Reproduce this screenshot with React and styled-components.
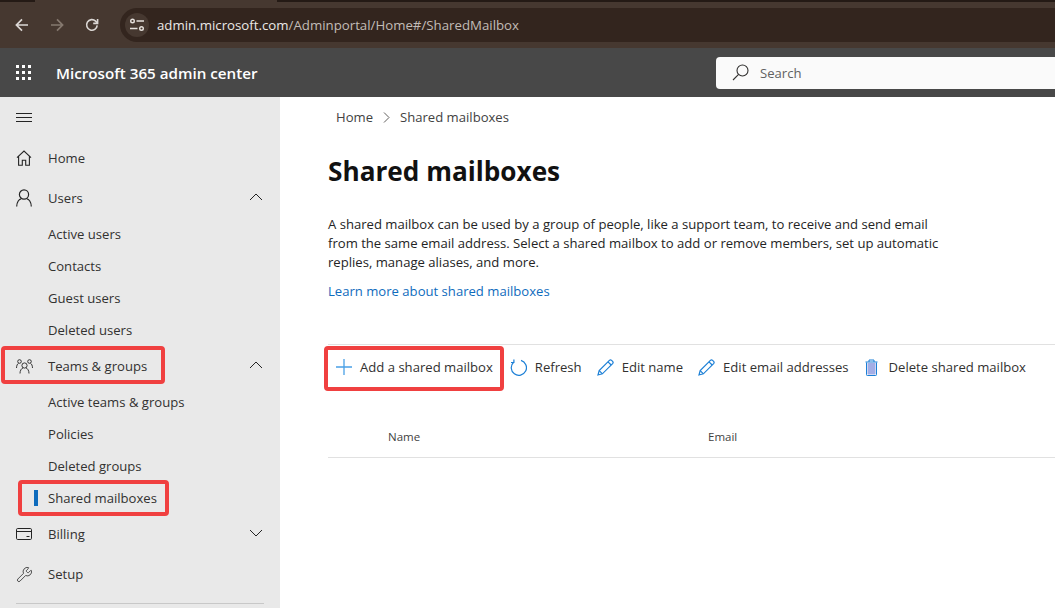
import React from 'react';
import styled, { createGlobalStyle } from 'styled-components';
import { Wrench } from 'lucide-react';

const GlobalStyle = createGlobalStyle`
    html, body{
        margin: 0;
        padding: 0;
        height: 100%;
        overflow: hidden;
        background: white;
    }
    body{
        font-family: "Open Sans", "Noto Sans", sans-serif;
        font-size: 13.1px;
        color: #323130;
    }
`;

const subUsers = ['Active users', 'Contacts', 'Guest users', 'Deleted users'];

const Back = (props) => (
    <svg width="14" height="14" viewBox="0 0 14 14" fill="none" stroke="currentColor" strokeWidth="1.7" {...props}>
        <path d="M13 7H1.6M7 1.400 1.400 7 7 12.600" />
    </svg>
);

const Reload = () => (
    <svg width="14" height="14" viewBox="0 0 14 14" fill="none" stroke="currentColor" strokeWidth="1.6">
        <path d="M12.2 7.4A5.3 5.3 0 1 1 10.6 3.1L12.4 5" />
        <path d="M12.6 1v4.4H8.2" />
    </svg>
);

const Tune = () => (
    <svg width="16" height="14" viewBox="0 0 16 14" fill="none" stroke="#e6e1dd" strokeWidth="1.4">
        <circle cx="3.500" cy="3" r="1.8" />
        <path d="M7.500 3H15M1 10.500h7.500" />
        <circle cx="12.500" cy="10.500" r="1.8" />
    </svg>
);

const Waffle = () => (
    <svg width="16" height="16" viewBox="0 0 16 16" fill="white">
        {[0, 6, 12].map((y) =>
            [0, 6, 12].map((x) => <rect key={x + '-' + y} x={x} y={y} width="3" height="3" />)
        )}
    </svg>
);

const Magnifier = () => (
    <svg width="17" height="17" viewBox="0 0 17 17" fill="none" stroke="#323130" strokeWidth="1.1">
        <circle cx="10.500" cy="6.500" r="5.500" />
        <path d="M6.600 10.400 1 16" />
    </svg>
);

const Hamburger = () => (
    <svg width="16" height="9" viewBox="0 0 16 9" stroke="#242424" strokeWidth="1">
        <path d="M0 .5h16M0 4.500h16M0 8.500h16" />
    </svg>
);

const HomeIcon = () => (
    <svg width="16" height="16" viewBox="0 0 16 16" fill="none" stroke="#242424" strokeWidth="1.1">
        <path d="M1 7.600 8 1l7 6.600M2.600 6.400v8.800h3.700v-5h3.400v5h3.700V6.400" />
    </svg>
);

const UserIcon = () => (
    <svg width="16" height="18" viewBox="0 0 16 18" fill="none" stroke="#242424" strokeWidth="1.2">
        <circle cx="8" cy="5.500" r="4.600" />
        <path d="M.7 17.500c0-4.600 2.600-7.400 4.400-7.700M15.300 17.500c0-4.600-2.600-7.400-4.400-7.700" />
    </svg>
);

const TeamIcon = () => (
    <svg width="17" height="15" viewBox="0 0 17 15" fill="none" stroke="#242424" strokeWidth="0.9">
        <circle cx="3.500" cy="2.500" r="1.800" />
        <circle cx="13.500" cy="2.500" r="1.800" />
        <circle cx="8.500" cy="6.500" r="2.600" />
        <path d="M.5 9c0-2.500 1-4.200 2-4.700M16.500 9c0-2.500-1-4.200-2-4.700M4 14.500c0-3 1.400-5 3-5.600M13 14.500c0-3-1.400-5-3-5.600" />
    </svg>
);

const CardIcon = () => (
    <svg width="16" height="12" viewBox="0 0 16 12" fill="none" stroke="#242424" strokeWidth="1">
        <rect x=".5" y=".5" width="15" height="11" rx="1.200" />
        <path d="M.5 3.500h15M10.500 8.500h3" />
    </svg>
);

const Plus = () => (
    <svg width="16" height="16" viewBox="0 0 16 16" stroke="#4aa0e6" strokeWidth="1.3">
        <path d="M8 0v16M0 8h16" />
    </svg>
);

const RefreshIcon = () => (
    <svg width="17" height="17" viewBox="0 0 17 17" fill="none" stroke="#1b7fd6" strokeWidth="1.2">
        <path d="M3.600 3.200A7.600 7.600 0 1 0 11 1.400" />
        <path d="M3.900.6v2.900H1" />
    </svg>
);

const Pencil = () => (
    <svg width="17" height="17" viewBox="0 0 17 17" fill="none" stroke="#1b7fd6" strokeWidth="1.2">
        <path d="M1 16l1.200-4.400L12.400 1.400a1.600 1.600 0 0 1 2.200 0l1 1a1.600 1.600 0 0 1 0 2.200L5.400 14.800z" />
        <path d="M2.200 11.600l3.200 3.200M11 2.800l3.200 3.200" />
    </svg>
);

const TrashIcon = () => (
    <svg width="16" height="17" viewBox="0 0 16 17">
        <rect x="2.500" y="4" width="8" height="11.500" fill="#a4aee6" />
        <path d="M1.500 3.500v12.200a.8.8 0 0 0 .8.8h8.400a.8.8 0 0 0 .8-.8V3.500M.5 3h12M4 3V1h5v2" fill="none" stroke="#1b7fd6" strokeWidth="1" />
    </svg>
);

const Chevron = ({ up }) => (
    <ChevronBox width="14" height="8" viewBox="0 0 14 8" fill="none" stroke="#242424" strokeWidth="1">
        <path d={up ? 'M1 7 7 1l6 6' : 'M1 1l6 6 6-6'} />
    </ChevronBox>
);

const NavRow = ({ icon, label, chevron, mark }) => (
    <TopRow>
        {mark && <Mark $top={0} $left={1} $width={164} $height={38} />}
        <IconSlot>{icon}</IconSlot>
        {label}
        {chevron && <Chevron up={chevron === 'up'} />}
    </TopRow>
);

export default function App(){
    return (
        <Page>
            <GlobalStyle />
            <TopStrip>
                <TabShade $width={35} />
                <ActiveTab />
                <TabShade $grow />
            </TopStrip>
            <BrowserBar>
                <BarButton><Back /></BarButton>
                <BarButton $dim><Back transform="scale(-1 1)" /></BarButton>
                <BarButton><Reload /></BarButton>
                <UrlPill>
                    <SiteIcon><Tune /></SiteIcon>
                    <UrlHost>admin.microsoft.com</UrlHost>
                    <UrlPath>/Adminportal/Home#/SharedMailbox</UrlPath>
                </UrlPill>
            </BrowserBar>
            <AppHeader>
                <WaffleSlot><Waffle /></WaffleSlot>
                <AppTitle>Microsoft 365 admin center</AppTitle>
                <SearchBox>
                    <Magnifier />
                    <SearchText>Search</SearchText>
                </SearchBox>
            </AppHeader>
            <Body>
                <Sidebar>
                    <MenuRow><Hamburger /></MenuRow>
                    <NavRow icon={<HomeIcon />} label="Home" />
                    <NavRow icon={<UserIcon />} label="Users" chevron="up" />
                    {subUsers.map((item) => <SubRow key={item}>{item}</SubRow>)}
                    <NavRow icon={<TeamIcon />} label="Teams & groups" chevron="up" mark />
                    <SubRow>Active teams &amp; groups</SubRow>
                    <SubRow>Policies</SubRow>
                    <SubRow>Deleted groups</SubRow>
                    <SubRow>
                        <ActiveBar />
                        <Mark $top={-2} $left={18} $width={151} $height={36} />
                        Shared mailboxes
                    </SubRow>
                    <NavRow icon={<CardIcon />} label="Billing" chevron="down" />
                    <NavRow icon={<Wrench size={17} strokeWidth={1.1} color="#242424" />} label="Setup" />
                    <SideDivider />
                </Sidebar>
                <Main>
                    <Breadcrumb>
                        <span>Home</span>
                        <svg width="7" height="11" viewBox="0 0 7 11" fill="none" stroke="#605e5c" strokeWidth="1">
                            <path d="M1 .5l5 5-5 5" />
                        </svg>
                        <span>Shared mailboxes</span>
                    </Breadcrumb>
                    <Title>Shared mailboxes</Title>
                    <Description>
                        A shared mailbox can be used by a group of people, like a support team, to receive and send email
                        from the same email address. Select a shared mailbox to add or remove members, set up automatic
                        replies, manage aliases, and more.
                    </Description>
                    <LearnLink>Learn more about shared mailboxes</LearnLink>
                    <Toolbar>
                        <ToolButton $gap={17}>
                            <Mark $top={-12} $left={-12} $width={180} $height={45} />
                            <Plus />Add a shared mailbox
                        </ToolButton>
                        <ToolButton $gap={15}><RefreshIcon />Refresh</ToolButton>
                        <ToolButton $gap={15}><Pencil />Edit name</ToolButton>
                        <ToolButton><Pencil />Edit email addresses</ToolButton>
                        <ToolButton><TrashIcon />Delete shared mailbox</ToolButton>
                    </Toolbar>
                    <TableHead>
                        <NameCol>Name</NameCol>
                        <span>Email</span>
                    </TableHead>
                </Main>
            </Body>
        </Page>
    );
}

const Page = styled.div`
    width: 1055px;
    height: 608px;
    display: flex;
    flex-direction: column;
    overflow: hidden;
`;

const TopStrip = styled.div`
    height: 2px;
    display: flex;
`;

const TabShade = styled.div`
    background: #241a15;
    width: ${(p) => (p.$width ? p.$width + 'px' : 'auto')};
    flex: ${(p) => (p.$grow ? 1 : 'none')};
`;

const ActiveTab = styled.div`
    width: 242px;
    background: #463830;
`;

const BrowserBar = styled.div`
    height: 46px;
    background: #463830;
    display: flex;
    align-items: center;
    padding-left: 4px;
    box-sizing: border-box;
`;

const BarButton = styled.div`
    width: 35px;
    display: flex;
    justify-content: center;
    color: ${(p) => (p.$dim ? '#85796f' : '#dcd8d5')};
`;

const UrlPill = styled.div`
    flex: 1;
    height: 34px;
    margin-left: 11px;
    background: #33251e;
    border-radius: 17px 0 0 17px;
    display: flex;
    align-items: center;
    padding-left: 5px;
    font-size: 13.25px;
`;

const SiteIcon = styled.div`
    width: 24px;
    height: 24px;
    border-radius: 50%;
    background: #463830;
    display: flex;
    align-items: center;
    justify-content: center;
    margin-right: 8px;
`;

const UrlHost = styled.span`
    color: #ebe8e6;
`;

const UrlPath = styled.span`
    color: #c2bcb7;
`;

const AppHeader = styled.div`
    height: 49px;
    background: #484848;
    display: flex;
    align-items: center;
    flex: none;
`;

const WaffleSlot = styled.div`
    width: 56px;
    padding-left: 16px;
    box-sizing: border-box;
    display: flex;
`;

const AppTitle = styled.div`
    color: white;
    font-size: 15.2px;
    font-weight: 600;
    width: 660px;
`;

const SearchBox = styled.div`
    flex: 1;
    height: 32px;
    background: #fafafa;
    border-radius: 4px 0 0 4px;
    display: flex;
    align-items: center;
    gap: 11px;
    padding-left: 16px;
`;

const SearchText = styled.span`
    color: #616161;
    margin-top: 1px;
`;

const Body = styled.div`
    flex: 1;
    display: flex;
    min-height: 0;
`;

const Sidebar = styled.nav`
    width: 280px;
    flex: none;
    background: #e9e9e9;
`;

const MenuRow = styled.div`
    height: 41px;
    display: flex;
    align-items: center;
    padding-left: 16px;
`;

const TopRow = styled.div`
    position: relative;
    height: 40px;
    display: flex;
    align-items: center;
    padding-left: 16px;
`;

const IconSlot = styled.div`
    width: 32px;
    display: flex;
    align-items: center;
`;

const ChevronBox = styled.svg`
    position: absolute;
    left: 249px;
    top: 15px;
`;

const SubRow = styled.div`
    position: relative;
    height: 32px;
    display: flex;
    align-items: center;
    padding-left: 48px;
`;

const ActiveBar = styled.div`
    position: absolute;
    left: 34px;
    top: 8px;
    width: 4px;
    height: 16px;
    background: #0f6cbd;
`;

const Mark = styled.div`
    position: absolute;
    top: ${(p) => p.$top}px;
    left: ${(p) => p.$left}px;
    width: ${(p) => p.$width}px;
    height: ${(p) => p.$height}px;
    box-sizing: border-box;
    border: 4px solid #f04040;
    border-radius: 4px;
    pointer-events: none;
`;

const SideDivider = styled.div`
    height: 1px;
    margin: 9px 16px 0;
    background: #c8c8c8;
`;

const Main = styled.main`
    flex: 1;
    min-width: 0;
    padding-left: 48px;
    background: white;
`;

const Breadcrumb = styled.div`
    height: 40px;
    display: flex;
    align-items: center;
    gap: 10px;
    padding-left: 8px;
    color: #424242;
    white-space: nowrap;
`;

const Title = styled.h1`
    margin: 15px 0 0;
    font-size: 26.2px;
    font-weight: 700;
    line-height: 38px;
    color: #111;
    white-space: nowrap;
`;

const Description = styled.p`
    margin: 25px 0 0;
    width: 620px;
    line-height: 19px;
    color: #242424;
`;

const LearnLink = styled.div`
    margin-top: 10px;
    line-height: 19px;
    color: #0f6cbd;
`;

const Toolbar = styled.div`
    margin-top: 43px;
    height: 44px;
    border-top: 1px solid #e1e1e1;
    display: flex;
    align-items: center;
    padding-left: 8px;
    white-space: nowrap;
`;

const ToolButton = styled.div`
    position: relative;
    display: flex;
    align-items: center;
    gap: 8px;
    margin-right: ${(p) => p.$gap || 16}px;
`;

const TableHead = styled.div`
    margin-top: 25px;
    height: 41px;
    padding-top: 2px;
    border-bottom: 1px solid #e1e1e1;
    display: flex;
    align-items: center;
    padding-left: 60px;
    font-size: 11.5px;
    color: #424242;
`;

const NameCol = styled.span`
    width: 320px;
`;
